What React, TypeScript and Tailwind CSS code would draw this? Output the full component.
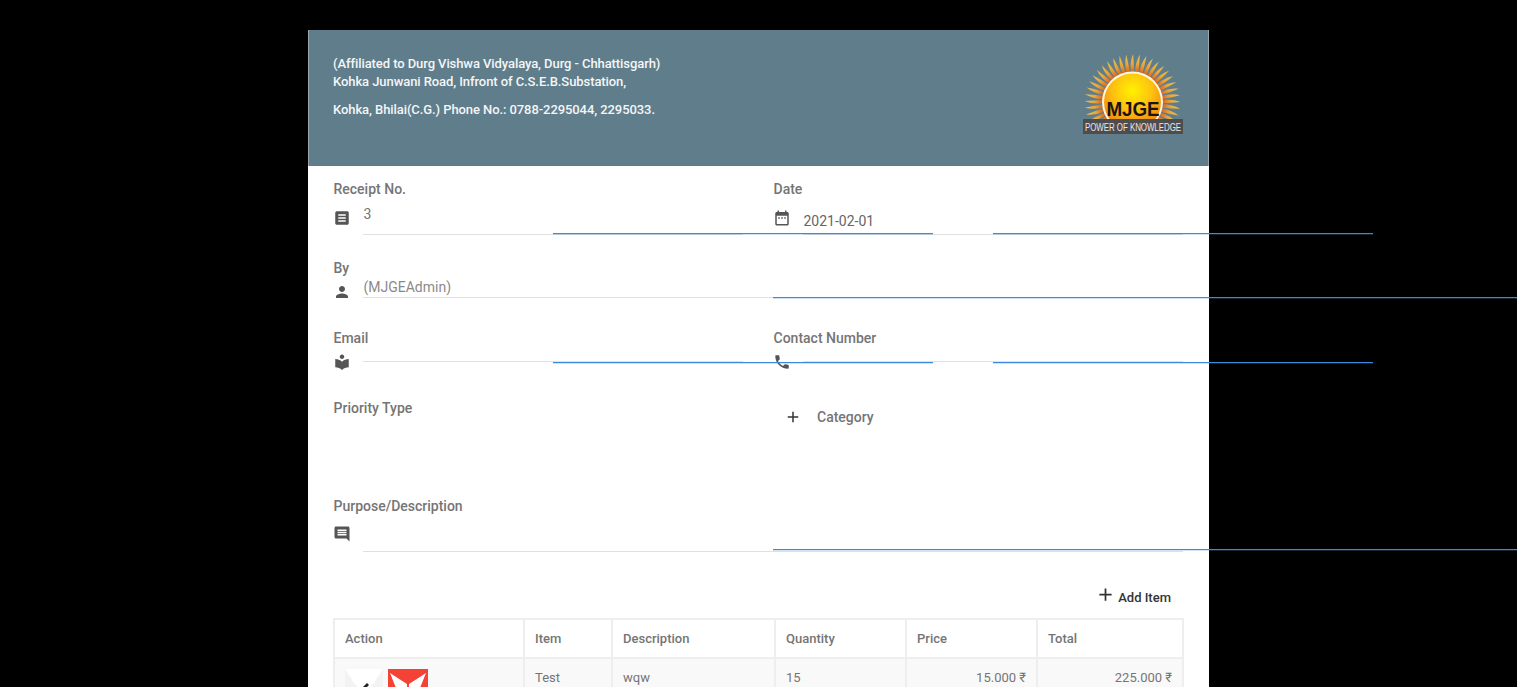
import React from 'react';

const iconPaths = {
  receipt: 'M19 3H5c-.6 0-2 .9-2 2v14c0 1.1.9 2 2 2h14c1.1 0 2-.9 2-2V5c0-1.1-.9-2-2-2zm-2 14H7v-2h10v2zm0-4H7v-2h10v2zm0-4H7V7h10v2z',
  calendar: 'M9 11H7v2h2v-2zm4 0h-2v2h2v-2zm4 0h-2v2h2v-2zm2-7h-1V2h-2v2H8V2H6v2H5c-1.11 0-1.99.9-1.99 2L3 20c0 1.1.89 2 2 2h14c1.1 0 2-.9 2-2V6c0-1.1-.9-2-2-2zm0 16H5V9h14v11z',
  person: 'M12 12c2.21 0 4-1.79 4-4s-1.79-4-4-4-4 1.79-4 4 1.79 4 4 4zm0 2c-2.67 0-8 1.34-8 4v2h16v-2c0-2.66-5.33-4-8-4z',
  library: 'M12 11.55C9.64 9.35 6.48 8 3 8v11c3.48 0 6.64 1.35 9 3.55 2.36-2.19 5.52-3.55 9-3.55V8c-3.48 0-6.64 1.35-9 3.55zM12 8c1.66 0 3-1.34 3-3s-1.34-3-3-3-3 1.34-3 3 1.34 3 3 3z',
  phone: 'M6.62 10.79c1.44 2.83 3.76 5.14 6.59 6.59l2.2-2.2c.27-.27.67-.36 1.02-.24 1.12.37 2.33.57 3.57.57.55 0 1 .45 1 1V20c0 .55-.45 1-1 1-9.39 0-17-7.61-17-17 0-.55.45-1 1-1h3.5c.55 0 1 .45 1 1 0 1.25.2 2.45.57 3.57.11.35.03.74-.25 1.02l-2.2 2.2z',
  comment: 'M21.99 4c0-1.1-.89-2-1.99-2H4c-1.1 0-2 .9-2 2v12c0 1.1.9 2 2 2h14l4 4-.01-18zM18 14H6v-2h12v2zm0-3H6V9h12v2zm0-3H6V6h12v2z',
  plus: 'M19 13h-6v6h-2v-6H5v-2h6V5h2v6h6v2z',
};

function Icon({ name, className }: { name: keyof typeof iconPaths; className: string }) {
  return (
    <svg viewBox="0 0 24 24" className={className} fill="currentColor">
      <path d={iconPaths[name]} />
    </svg>
  );
}

function Logo() {
  // rays fan out from the lower left round the top to the lower right
  const rays = Array.from({ length: 31 }, (_, i) => -122 + i * 8.13);
  return (
    <svg viewBox="0 0 100 82" className="w-[100px] h-[82px] shrink-0">
      <defs>
        <radialGradient id="sun" cx="50%" cy="30%" r="70%">
          <stop offset="0%" stopColor="#fff200" />
          <stop offset="50%" stopColor="#fdc010" />
          <stop offset="100%" stopColor="#ee7a14" />
        </radialGradient>
        <linearGradient id="ray" x1="0" y1="0" x2="0" y2="1">
          <stop offset="0%" stopColor="#e8c45a" />
          <stop offset="55%" stopColor="#e9a63a" />
          <stop offset="100%" stopColor="#d9661f" />
        </linearGradient>
      </defs>
      {rays.map((a) => (
        <path
          key={a}
          d="M-1.6 -30 Q-2.8 -40 0.6 -48 Q1.5 -40 1.6 -30 Z"
          fill="url(#ray)"
          transform={`translate(49.5 50) rotate(${a})`}
        />
      ))}
      <circle cx="49.5" cy="50" r="30.5" fill="#fff6e0" />
      <circle cx="49.5" cy="50" r="28.5" fill="url(#sun)" />
      <text x="50" y="64" textAnchor="middle" fontFamily="'Liberation Sans', sans-serif" fontWeight="700" fontSize="19.5" fill="#1b1410" textLength="53" lengthAdjust="spacingAndGlyphs">
        MJGE
      </text>
      <rect x="0" y="67" width="100" height="15" fill="#4d4d4f" />
      <text x="50" y="78.5" textAnchor="middle" fontFamily="'Liberation Sans', sans-serif" fontSize="10" fill="#e8e8e8" textLength="96" lengthAdjust="spacingAndGlyphs">
        POWER OF KNOWLEDGE
      </text>
    </svg>
  );
}

function Field({
  label, icon, iconClass, inputClass, value, textClass, barClass, wrapClass,
}: {
  label: string;
  icon: keyof typeof iconPaths;
  iconClass: string;
  inputClass: string;
  value?: string;
  textClass?: string;
  barClass: string;
  wrapClass?: string;
}) {
  return (
    <div className={wrapClass}>
      <div className="h-5 pl-[0.5px] leading-5 text-sm font-medium text-[#757575]">{label}</div>
      <div className="flex gap-[12px] items-start">
        <Icon name={icon} className={`w-[18px] h-[18px] shrink-0 text-[#555] ${iconClass}`} />
        <div className={`relative flex-1 border-b border-[#e0e0e0] ${inputClass}`}>
          {value && <div className={`pl-[0.5px] text-sm leading-5 ${textClass}`}>{value}</div>}
          <div className={`absolute z-10 left-1/2 w-full h-[2px] bg-[linear-gradient(#3a8ae0_50%,#3a8ae040_50%)] ${barClass}`} />
        </div>
      </div>
    </div>
  );
}

const cols = ['w-[190px]', 'w-[88px]', 'w-[163px]', 'w-[131px]', 'w-[131px]', 'w-[146px]'];
const heads = ['Action', 'Item', 'Description', 'Quantity', 'Price', 'Total'];

export default function App() {
  return (
    <div className="h-screen overflow-hidden bg-black pt-[30px] font-['Roboto',sans-serif]">
      <div className="ml-[308px] w-[901px] bg-white">
        <div className="flex items-center justify-between h-[136px] bg-[#607d8b] border-x border-[#9aa7ae] pl-[24px] pr-[25px] text-[13px] font-medium tracking-[-0.08px] text-[#f4f6f7]">
          <div className="-mt-[23px]">
            <div className="leading-[18px]">(Affiliated to Durg Vishwa Vidyalaya, Durg - Chhattisgarh)</div>
            <div className="leading-[18px]">Kohka Junwani Road, Infront of C.S.E.B.Substation,</div>
            <div className="leading-[18px] mt-[10px]">Kohka, Bhilai(C.G.) Phone No.: 0788-2295044, 2295033.</div>
          </div>
          <div className="-mt-[11px]">
            <Logo />
          </div>
        </div>

        <div className="pl-[25px] pr-[26px] pt-[13px]">
          <div className="grid grid-cols-2 gap-x-[30px]">
            <Field label="Receipt No." icon="receipt" iconClass="mt-[10px]" inputClass="h-[36px]" value="3" textClass="pt-[5px] text-[#757575]" barClass="-bottom-px" />
            <Field label="Date" icon="calendar" iconClass="mt-[10px]" inputClass="h-[36px]" value="2021-02-01" textClass="pt-[12px] text-[#666]" barClass="-bottom-px" />
          </div>

          <Field
            wrapClass="mt-[23px]"
            label="By"
            icon="person"
            iconClass="mt-[5px]"
            inputClass="h-[20px]"
            value="(MJGEAdmin)"
            textClass="-mt-[1px] text-[#8a8a8a]"
            barClass="-bottom-[2px]"
          />

          <div className="grid grid-cols-2 gap-x-[30px] mt-[27px]">
            <Field label="Email" icon="library" iconClass="mt-[5px]" inputClass="h-[14px]" barClass="-bottom-[3px]" />
            <Field label="Contact Number" icon="phone" iconClass="mt-[5px]" inputClass="h-[14px]" barClass="-bottom-[3px]" />
          </div>

          <div className="grid grid-cols-2 gap-x-[30px] mt-[27px] h-[98px]">
            <div className="h-5 pl-[0.5px] leading-5 text-sm font-medium text-[#757575]">Priority Type</div>
            <div className="flex items-center h-5 mt-[9px] pl-[11px] gap-[15px] text-sm font-medium text-[#757575]">
              <Icon name="plus" className="w-[18px] h-[18px] text-[#333]" />
              <span>Category</span>
            </div>
          </div>

          <Field label="Purpose/Description" icon="comment" iconClass="mt-[9px]" inputClass="h-[36px]" barClass="bottom-0" />

          <div className="flex justify-end items-center gap-[2px] h-5 mt-[36px] pr-[12px] text-[13px] font-medium text-[#333]">
            <Icon name="plus" className="w-[21px] h-[21px] -mt-[8px]" />
            <span>Add Item</span>
          </div>

          <table className="mt-[10px] w-[849px] table-fixed border-collapse text-[13px] text-[#757575]">
            <thead>
              <tr className="h-[39px]">
                {heads.map((h, i) => (
                  <th key={h} className={`${cols[i]} border-2 border-[#eeeeee] px-[10px] text-left font-medium`}>{h}</th>
                ))}
              </tr>
            </thead>
            <tbody>
              <tr className="bg-[#f9f9f9] h-[60px] align-top">
                <td className="border-2 border-[#eeeeee] px-[10px] pt-[10px]">
                  <div className="flex gap-[5px]">
                    <svg viewBox="0 0 38 40" className="w-[38px] h-[40px]">
                      <rect width="38" height="40" fill="#f3f3f3" />
                      <path d="M0 0H38L29 14L19 24L9 14Z" fill="#ffffff" />
                      <path d="M16 20l6-6 2 2-6 6h-2z" fill="#222" />
                    </svg>
                    <svg viewBox="0 0 40 40" className="w-10 h-10">
                      <rect width="40" height="40" fill="#f44336" />
                      <path d="M2 4L19 15V22L8 19ZM38 4L21 15V22L32 19Z" fill="#fff" />
                      <circle cx="20" cy="24" r="6" fill="#fff" />
                    </svg>
                  </div>
                </td>
                <td className="border-2 border-[#eeeeee] px-[10px] pt-[9px]">Test</td>
                <td className="border-2 border-[#eeeeee] px-[10px] pt-[9px]">wqw</td>
                <td className="border-2 border-[#eeeeee] px-[10px] pt-[9px]">15</td>
                <td className="border-2 border-[#eeeeee] px-[10px] pt-[9px] text-right">15.000 ₹</td>
                <td className="border-2 border-[#eeeeee] px-[10px] pt-[9px] text-right">225.000 ₹</td>
              </tr>
            </tbody>
          </table>
        </div>
      </div>
    </div>
  );
}
